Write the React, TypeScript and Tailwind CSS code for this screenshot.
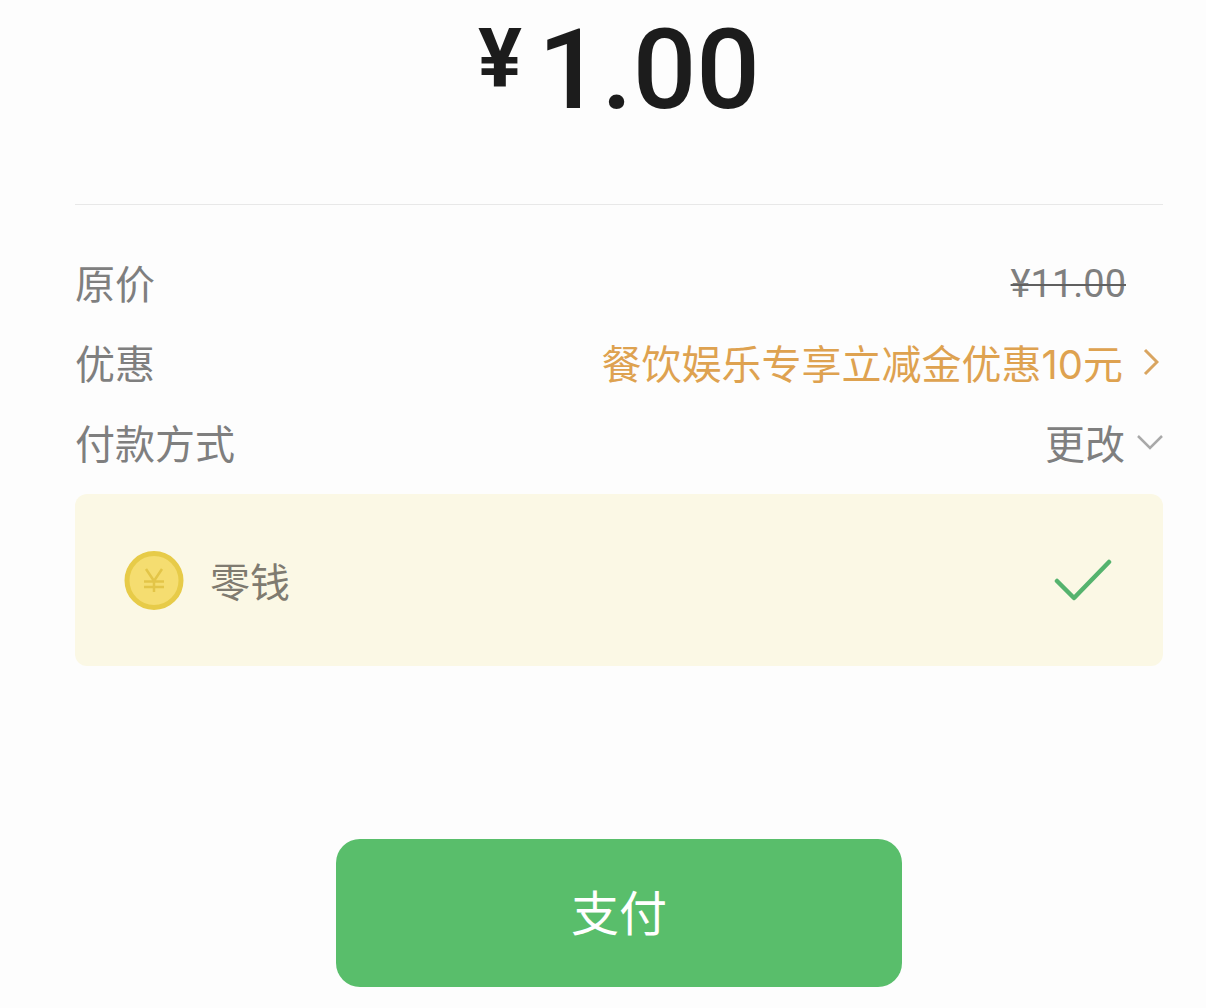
import { useState } from 'react'

type ChevronProps = {
  direction: 'right' | 'down'
}

function Chevron({ direction }: ChevronProps) {
  if (direction === 'right') {
    return (
      <svg className="w-[16px] h-[28px]" viewBox="0 0 16 28" fill="none" aria-hidden="true">
        <path d="M2 2 L14 14 L2 26" stroke="#d9a560" strokeWidth="3" />
      </svg>
    )
  }

  return (
    <svg className="w-[26px] h-[16px]" viewBox="0 0 26 16" fill="none" aria-hidden="true">
      <path d="M1 2 L13 14 L25 2" stroke="#a9a9a9" strokeWidth="2.5" />
    </svg>
  )
}

function CoinIcon() {
  return (
    <svg className="size-[60px]" viewBox="0 0 60 60" fill="none" aria-hidden="true">
      <circle cx="30" cy="30.5" r="27" fill="#f5dd70" stroke="#e7cb48" strokeWidth="5" />
      <path
        d="M22 19 L30 31 L38 19 M30 31 V42 M20 31.5 H40 M20 37 H40"
        stroke="#e3c548"
        strokeWidth="2.5"
      />
    </svg>
  )
}

function CheckIcon() {
  return (
    <svg className="w-[60px] h-[44px]" viewBox="0 0 60 44" fill="none" aria-hidden="true">
      <path
        d="M3 23 L20 40 L55 4"
        stroke="#55b36e"
        strokeWidth="4.5"
        strokeLinecap="round"
        strokeLinejoin="round"
      />
    </svg>
  )
}

export default function App() {
  const [method, setMethod] = useState('balance')

  return (
    <div className="min-h-screen bg-[#fdfdfd] pl-[75px] pr-[43px] pb-5 font-['Noto_Sans_CJK_SC',sans-serif] text-[40px] leading-[80px] text-[#7f7f7f]">
      {/* Amount */}
      <header className="flex items-start justify-center gap-4 h-[205px] border-b border-[#e8e8e8] font-['Roboto',sans-serif] text-[#1c1c1c]">
        <span className="mt-[17px] text-[82px] leading-[82px] font-bold">¥</span>
        <h1 className="text-[112px] leading-[140px] font-medium">1.00</h1>
      </header>

      {/* Order details */}
      <main>
        <dl className="pt-[37px]">
          <div className="flex h-20 justify-between">
            <dt>原价</dt>
            <dd className="pr-[37px] font-['Roboto',sans-serif] text-[38px] leading-[84px]">
              <s className="decoration-2 decoration-[#606060]">¥11.00</s>
            </dd>
          </div>
          <div className="flex h-20 justify-between">
            <dt>优惠</dt>
            <dd className="flex">
              <button type="button" className="flex items-center gap-5 pr-1 text-[#dea250]">
                <span>
                  餐饮娱乐专享立减金优惠<span className="font-['Inter',sans-serif] leading-none">10</span>元
                </span>
                <Chevron direction="right" />
              </button>
            </dd>
          </div>
          <div className="flex h-20 justify-between">
            <dt>付款方式</dt>
            <dd className="flex">
              <button type="button" className="flex items-center gap-3">
                更改
                <Chevron direction="down" />
              </button>
            </dd>
          </div>
        </dl>

        <label className="mt-3 flex items-center rounded-xl bg-[#fbf8e5] px-[49px] h-[172px] text-[#7f7b70] cursor-pointer">
          <input
            type="radio"
            name="method"
            value="balance"
            checked={method === 'balance'}
            onChange={(e) => setMethod(e.target.value)}
            className="sr-only"
          />
          <CoinIcon />
          <span className="ml-[26px] flex-1">零钱</span>
          {method === 'balance' && <CheckIcon />}
        </label>

        <button
          type="button"
          className="mx-auto mt-[173px] block w-[52%] h-[148px] rounded-3xl bg-[#59be6b] pb-1.5 text-5xl text-white"
        >
          支付
        </button>
      </main>
    </div>
  )
}
